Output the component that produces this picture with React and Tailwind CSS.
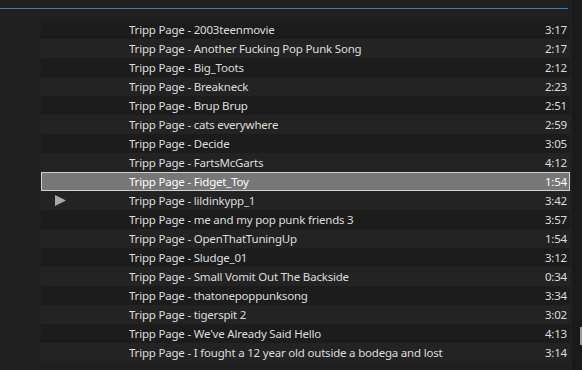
import React from 'react';

const tracks = [
  ['Tripp Page - 2003teenmovie', '3:17'],
  ['Tripp Page - Another Fucking Pop Punk Song', '2:17'],
  ['Tripp Page - Big_Toots', '2:12'],
  ['Tripp Page - Breakneck', '2:23'],
  ['Tripp Page - Brup Brup', '2:51'],
  ['Tripp Page - cats everywhere', '2:59'],
  ['Tripp Page - Decide', '3:05'],
  ['Tripp Page - FartsMcGarts', '4:12'],
  ['Tripp Page - Fidget_Toy', '1:54'],
  ['Tripp Page - lildinkypp_1', '3:42'],
  ['Tripp Page - me and my pop punk friends 3', '3:57'],
  ['Tripp Page - OpenThatTuningUp', '1:54'],
  ['Tripp Page - Sludge_01', '3:12'],
  ['Tripp Page - Small Vomit Out The Backside', '0:34'],
  ['Tripp Page - thatonepoppunksong', '3:34'],
  ['Tripp Page - tigerspit 2', '3:02'],
  ["Tripp Page - We've Already Said Hello", '4:13'],
  ['Tripp Page - I fought a 12 year old outside a bodega and lost', '3:14'],
];

const SELECTED = 8;
const PLAYING = 9;

function Row({ title, time, index }) {
  const selected = index === SELECTED;
  const base = selected
    ? 'bg-[#777777] border border-[#d0d0d0] text-white'
    : index % 2 === 0
    ? 'bg-[#1c1c1c] border border-transparent text-[#dedede]'
    : 'bg-[#232323] border border-transparent text-[#dedede]';
  return (
    <div className={`flex items-center h-[19px] ${base}`}>
      <div className="w-[87px] shrink-0 flex items-center pl-[13px]">
        {index === PLAYING && (
          <svg width="11" height="11" viewBox="0 0 10 10">
            <path d="M0 0 L10 5 L0 10 Z" fill="#a8a8a8" />
          </svg>
        )}
      </div>
      <div className="flex-1 truncate leading-[19px]">{title}</div>
      <div className="w-[40px] text-right pr-[2px] leading-[19px]">{time}</div>
    </div>
  );
}

export default function App() {
  return (
    <div
      className="flex w-[582px] h-[370px] bg-[#202020] text-[11.5px] tracking-[-0.2px] overflow-hidden"
      style={{ fontFamily: '"Noto Sans", "Open Sans", sans-serif' }}
    >
      <div className="flex-1 flex flex-col">
        <div className="h-[8px]" />
        <div className="h-px bg-[#3b7cbf] mr-[4px]" />
        <div className="h-[11px]" />
        <div className="flex flex-col ml-[41px] mr-[2px]">
          {tracks.map(([title, time], i) => (
            <Row key={title} title={title} time={time} index={i} />
          ))}
        </div>
      </div>
      <div className="w-[10px] bg-[#1a1a1a] flex flex-col">
        <div className="h-[327px]" />
        <div className="ml-[8px] w-[2px] h-[18px] bg-[#9a9a9a]" />
      </div>
    </div>
  );
}
